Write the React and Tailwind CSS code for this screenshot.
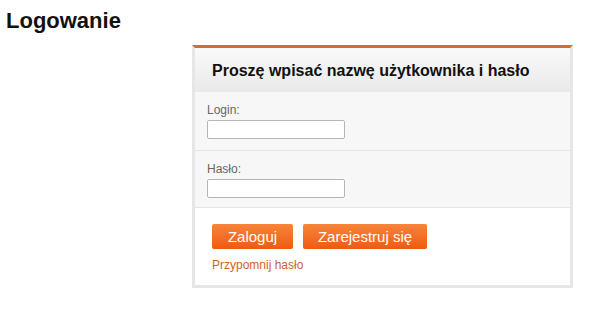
export default function App() {
    return (
        <div className="w-[596px] h-[322px] bg-white font-['Liberation_Sans',Arial,sans-serif]">
            <h1 className="pl-[6px] pt-[8px] text-[22px] leading-[26px] font-bold text-[#111]">
                Logowanie
            </h1>
            <div className="ml-[192px] mt-[11px] w-[381px] border-t-[3px] border-t-[#dd6a2c] border-x-[3px] border-b-[3px] border-x-[#e6e6e6] border-b-[#e6e6e6]">
                <div className="h-[44px] pl-[17px] pt-[13px] bg-gradient-to-b from-[#fafafa] to-[#e9e9e9]">
                    <h2 className="text-[16px] leading-[20px] font-bold text-[#111]">
                        Proszę wpisać nazwę użytkownika i hasło
                    </h2>
                </div>
                <div className="h-[59px] pl-[12px] pt-[11px] bg-[#f7f7f7] border-b border-[#e4e4e4]">
                    <label className="block text-[12px] leading-[14px] text-[#666]">
                        Login:
                    </label>
                    <input
                        type="text"
                        className="mt-[1px] w-[138px] h-[19px] bg-white border border-[#b5b5b5] rounded-[2px] outline-none"
                    />
                </div>
                <div className="h-[57px] pl-[12px] pt-[11px] bg-[#f7f7f7] border-b border-[#e4e4e4]">
                    <label className="block text-[12px] leading-[14px] text-[#666]">
                        Hasło:
                    </label>
                    <input
                        type="password"
                        className="mt-[1px] w-[138px] h-[19px] bg-white border border-[#b5b5b5] rounded-[2px] outline-none"
                    />
                </div>
                <div className="pl-[17px] pt-[16px] pb-[13px] bg-white">
                    <div className="flex gap-[10px]">
                        <button className="w-[81px] h-[25px] rounded-[2px] bg-gradient-to-b from-[#f7843a] to-[#f05a0c] text-white text-[15px] leading-[18px]">
                            Zaloguj
                        </button>
                        <button className="w-[124px] h-[25px] rounded-[2px] bg-gradient-to-b from-[#f7843a] to-[#f05a0c] text-white text-[15px] leading-[18px]">
                            Zarejestruj się
                        </button>
                    </div>
                    <a className="block mt-[9px] text-[12px] leading-[14px] text-[#d2621f]">
                        Przypomnij hasło
                    </a>
                </div>
            </div>
        </div>
    );
}
